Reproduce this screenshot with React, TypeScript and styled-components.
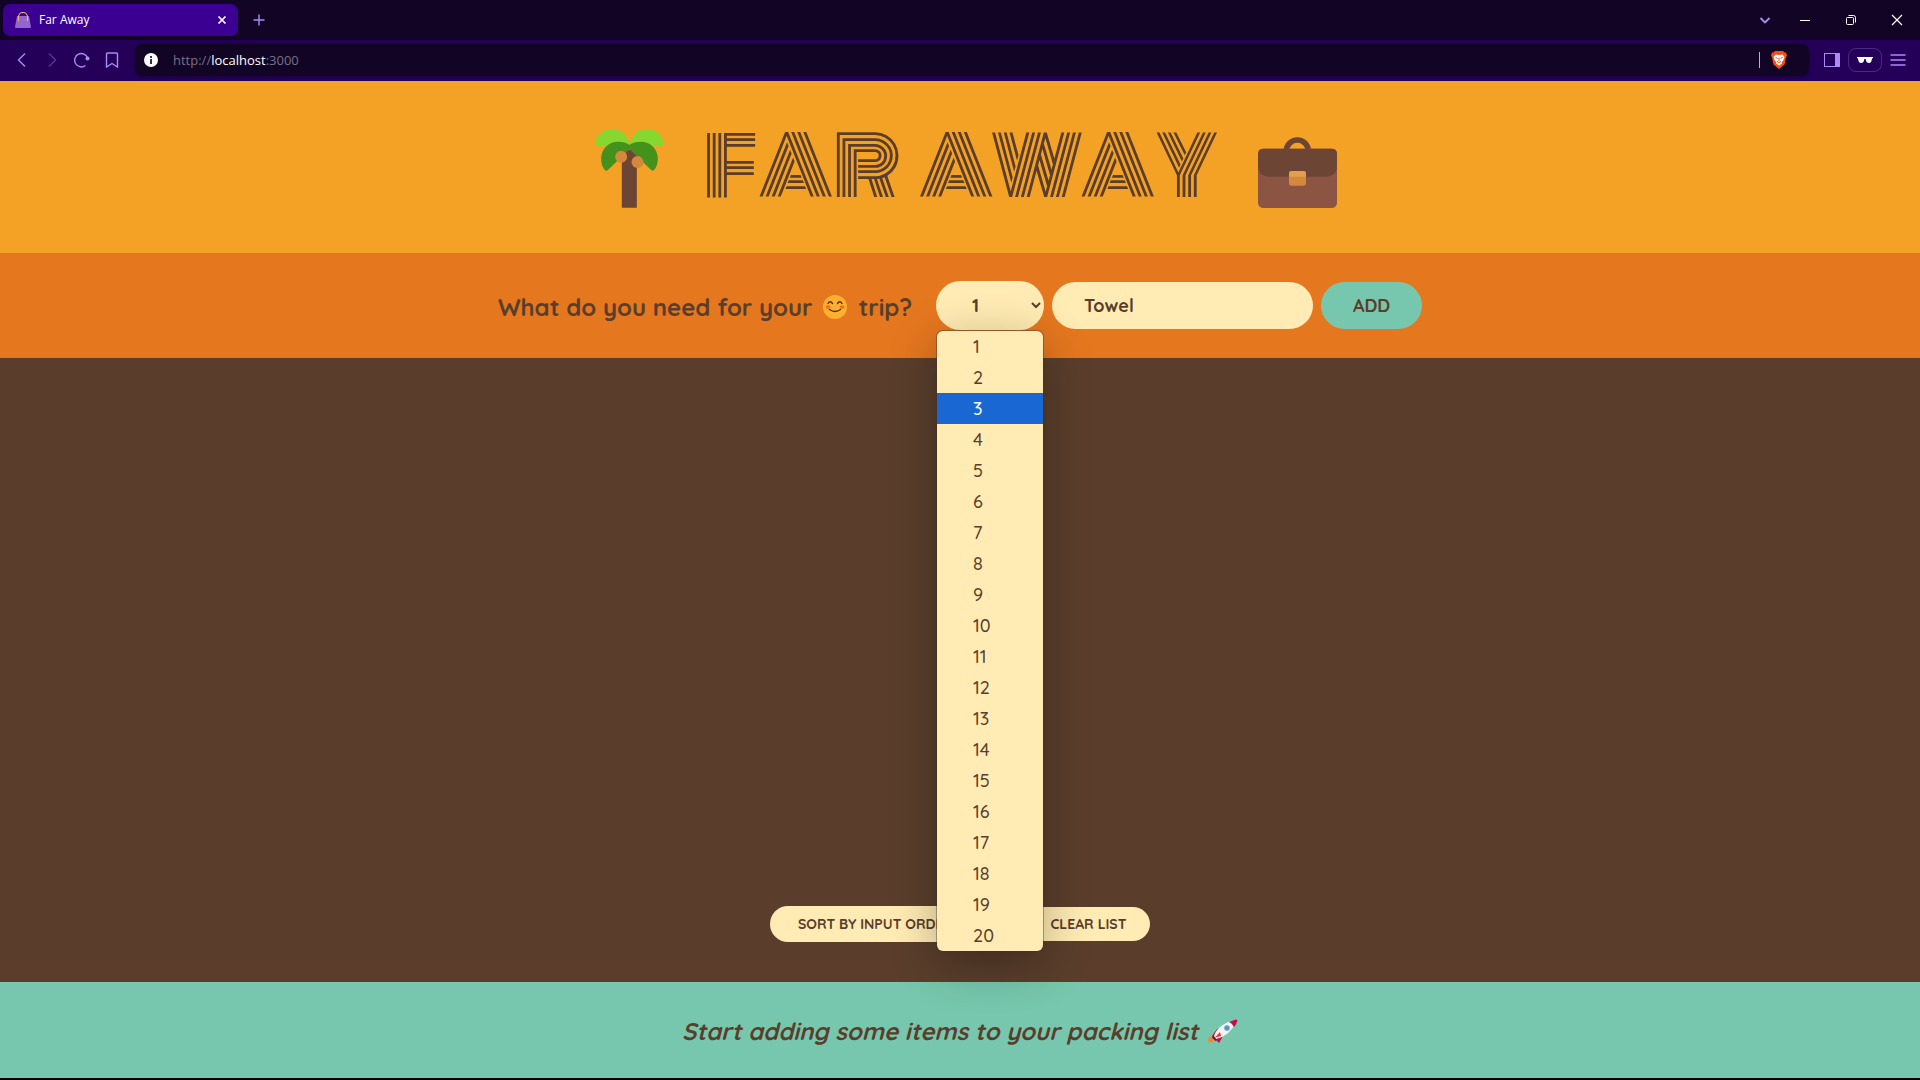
import React, { useState } from "react";
import styled, { createGlobalStyle } from "styled-components";

const color = {
  brown: "#5a3e2b",
  amber: "#f4a226",
  orange: "#e5771f",
  cream: "#ffebb3",
  teal: "#76c7ad",
  lilac: "#a98bf5",
};

const GlobalStyle = createGlobalStyle`
  *, *::before, *::after { box-sizing: border-box; }
  body {
    margin: 0;
    background: #000;
    color: ${color.brown};
    font-family: Quicksand, Lato, sans-serif;
  }
  button, select, input { font: inherit; color: inherit; border: 0; margin: 0; }
`;

const Page = styled.div`
  display: flex;
  flex-direction: column;
  min-height: 100vh;
  border-bottom: 2px solid #000;
`;

/* Browser frame */
const Frame = styled.div`
  font-family: "Segoe UI", "Open Sans", sans-serif;
  color: #fff;
`;

const TabStrip = styled.div`
  display: flex;
  align-items: center;
  height: 40px;
  padding-left: 3px;
  background: #120424;
`;

const Tab = styled.div`
  display: flex;
  align-items: center;
  gap: 8px;
  width: 235px;
  height: 32px;
  padding: 0 5px 0 12px;
  border-radius: 7px;
  background: #3b0091;
  font-size: 12px;
  line-height: 16px;
`;

const TabTitle = styled.span`
  flex: 1;
`;

const IconButton = styled.button<{ $width?: number; $color?: string }>`
  display: flex;
  align-items: center;
  justify-content: center;
  width: ${(p) => p.$width ?? 30}px;
  height: 24px;
  padding: 0;
  background: none;
  color: ${(p) => p.$color ?? color.lilac};
`;

const WindowButtons = styled.div`
  display: flex;
  margin-left: auto;
`;

const Toolbar = styled.div`
  display: flex;
  align-items: center;
  height: 41px;
  padding: 0 7px 1px;
  background: #240059;
`;

const AddressBar = styled.div`
  display: flex;
  flex: 1;
  align-items: center;
  height: 32px;
  margin: 0 8px;
  padding: 0 22px 0 9px;
  border-radius: 8px;
  background: #120424;
  box-shadow: 0 1px 4px rgba(0, 0, 0, 0.4);
`;

const Url = styled.div`
  flex: 1;
  padding-left: 15px;
  color: #77708a;
  font-size: 13px;
  line-height: 20px;
  b { font-weight: 400; color: #fff; }
`;

const Divider = styled.span`
  width: 1px;
  height: 16px;
  margin-right: 11px;
  background: #b8b2c4;
`;

const PrivateButton = styled(IconButton)`
  margin: 0 1px;
  border: 1px solid #4b2a86;
  border-radius: 8px;
`;

/* Application */
const Header = styled.header`
  display: flex;
  justify-content: center;
  gap: 40px;
  padding: 48px 0 45px 12px;
  background: ${color.amber};
  svg { align-self: flex-end; }
`;

const Title = styled.h1`
  display: flex;
  gap: 18px;
  margin: 0;
  font: 400 80px/76px Monoton, Quicksand, sans-serif;
  text-transform: uppercase;
`;

const AddForm = styled.form`
  display: flex;
  align-items: center;
  justify-content: center;
  gap: 8px;
  padding: 28px 0;
  background: ${color.orange};
`;

const Question = styled.h3`
  display: flex;
  align-items: center;
  gap: 11px;
  margin: 0 16px 0 0;
  padding-top: 2px;
  font-size: 24px;
  font-weight: 700;
  line-height: 32px;
`;

const Picker = styled.div`
  position: relative;
`;

const Select = styled.select<{ $small?: boolean }>`
  display: block;
  width: ${(p) => (p.$small ? 249 : 108)}px;
  height: ${(p) => (p.$small ? 36 : 49)}px;
  padding: ${(p) => (p.$small ? "0 24px" : "0 32px")};
  border-radius: 25px;
  background: ${color.cream};
  font-size: ${(p) => (p.$small ? 14 : 18)}px;
  font-weight: 700;
  outline: none;
`;

const Options = styled.ul`
  position: absolute;
  z-index: 1;
  top: 50px;
  left: 1px;
  right: 1px;
  margin: 0;
  padding: 0;
  overflow: hidden;
  list-style: none;
  border-radius: 6px;
  background: ${color.cream};
  box-shadow: 0 0 0 1px rgba(60, 50, 50, 0.4), 0 12px 48px rgba(0, 0, 0, 0.3);
`;

const Option = styled.li<{ $active: boolean }>`
  height: 31px;
  padding-left: 36px;
  font-size: 18px;
  font-weight: 500;
  line-height: 31px;
  color: ${(p) => (p.$active ? "#fff" : color.brown)};
  background: ${(p) => (p.$active ? "#1967d2" : "transparent")};
`;

const ItemInput = styled.input`
  width: 261px;
  height: 47px;
  padding: 0 32px;
  border-radius: 24px;
  background: ${color.cream};
  font-size: 18px;
  font-weight: 700;
  outline: none;
`;

const Button = styled.button<{ $small?: boolean }>`
  width: ${(p) => (p.$small ? 123 : 101)}px;
  height: ${(p) => (p.$small ? 34 : 47)}px;
  padding: 0;
  border-radius: 24px;
  background: ${(p) => (p.$small ? color.cream : color.teal)};
  font-size: ${(p) => (p.$small ? 14 : 18)}px;
  font-weight: 700;
  text-transform: uppercase;
`;

const List = styled.main`
  display: flex;
  flex: 1;
  align-items: flex-end;
  justify-content: center;
  padding-bottom: 40px;
  background: ${color.brown};
`;

const Actions = styled.div`
  display: flex;
  align-items: center;
  gap: 8px;
`;

const Footer = styled.footer`
  display: flex;
  align-items: center;
  justify-content: center;
  gap: 10px;
  padding: 33px 0 31px;
  background: ${color.teal};
  font-size: 24px;
  font-style: italic;
  font-weight: 700;
  line-height: 32px;
`;

const Line = ({ d, size = 16, width = 1.4 }: { d: string; size?: number; width?: number }) => (
  <svg width={size} height={size} viewBox="0 0 16 16" fill="none" stroke="currentColor" strokeWidth={width}>
    <path d={d} />
  </svg>
);

const Bag = () => (
  <svg width="16" height="16" viewBox="0 0 16 16">
    <path d="M2 4h12l2 11q0 1-1 1H1q-1 0-1-1z" fill="#9166cf" />
    <path d="M3.5 9V5a4.5 4.5 0 0 1 9 0v4" fill="none" stroke="#f0b35c" strokeWidth="1.2" />
  </svg>
);

const Brave = () => (
  <svg width="16" height="18" viewBox="0 0 16 18">
    <path d="M4 0h8l1.5 1.6 1.5 0 1 3-1 2-1.5 7L8 18l-5.500-4.400L1 6.600l-1-2 1-3 1.500 0z" fill="#fb4b12" />
    <path d="M4.500 3.500 8 4l3.500-.500L13.500 6l-1.500 4-1.500 1 .500 1.500L8 14.500 5 12.500 5.500 11 4 10 2.500 6z" fill="#fff" />
    <path d="m4.500 6.500 2 .800M11.500 6.500l-2 .800M8 6.500V10M6 10.500l2 1 2-1" stroke="#fb4b12" strokeWidth="1" fill="none" />
  </svg>
);

const Palm = () => (
  <svg width="69" height="79" viewBox="46 58 206 237">
    <path d="M52 110q-6 0-6-6C48 77 70 58 97 58c27 0 49 20 51 46l-12 6z" fill="#86d72f" />
    <path d="M246 110q6 0 6-6c-2-27-24-46-51-46-27 0-48 20-50 46l12 6z" fill="#86d72f" />
    <path d="M149 106c-9-7-20-10-34-10-29 0-51 22-51 51 0 13 4 25 11 34q4 5 9 0l65-62 65 62q5 5 9 0c7-9 11-21 11-34 0-29-22-51-51-51-14 0-25 3-34 10z" fill="#44911b" />
    <path d="M126 140q4-3 19-18 4-3 8 0l18 17v155h-45z" fill="#6d4534" />
    <circle cx="124" cy="141" r="18" fill="#d3883e" />
    <circle cx="173" cy="157" r="18" fill="#d3883e" />
  </svg>
);

const Briefcase = () => (
  <svg width="79" height="71" viewBox="1071 82 237 213">
    <path d="M1156 124a33 33 0 0 1 66 0" fill="none" stroke="#6d4534" strokeWidth="17" />
    <rect x="1071" y="117" width="237" height="178" rx="16" fill="#8c5543" />
    <path d="M1087 117h205q16 0 16 16v34q0 34-34 34h-169q-34 0-34-34v-34q0-16 16-16z" fill="#6d4534" />
    <rect x="1164" y="184" width="51" height="44" rx="8" fill="#d3883e" />
    <path d="M1164 201v-9q0-8 8-8h35q8 0 8 8v9z" fill="#e39f4d" />
  </svg>
);

const Smile = () => (
  <svg width="24" height="24" viewBox="0 0 24 24">
    <circle cx="12" cy="12" r="12" fill="#ffb02e" />
    <ellipse cx="5" cy="12" rx="2.500" ry="1.800" fill="#ff6723" />
    <ellipse cx="19" cy="12" rx="2.500" ry="1.800" fill="#ff6723" />
    <path d="M5 8.500q2-3.500 4.500 0M14.500 8.500q2.500-3.500 4.500 0M6.500 14.500q5.500 4 11 0" fill="none" stroke="#402a32" strokeWidth="1.300" strokeLinecap="round" />
  </svg>
);

const Rocket = () => (
  <svg width="30" height="25" viewBox="0 0 30 25">
    <path d="M0 23q0-6 4-5.500l3 3Q6 24 0 23z" fill="#ff822d" />
    <path d="M4 17 9 10q4-1 7 0L14 19l-3 5-2-2z" fill="#ca0b4a" />
    <path d="M6 17Q10 5 27 1q2 0 1 2Q22 17 8 20z" fill="#f4f4f4" />
    <path d="M21 3q4-2 7-2.500 2 0 1 2.500-1 3-3 5Q24 4 21 3z" fill="#ca0b4a" />
    <path d="M5 16.500 9 21l-1.500 1L4 18.500z" fill="#46265a" />
    <path d="M7 18.500 12 13l1 4z" fill="#f8312f" />
    <circle cx="19" cy="9" r="2.600" fill="#5092d8" stroke="#9bb4cf" />
  </svg>
);

export default function App() {
  const [item, setItem] = useState("Towel");
  const [quantity, setQuantity] = useState(1);
  const numbers = Array.from({ length: 20 }, (_, i) => i + 1);

  return (
    <Page>
      <GlobalStyle />
      <Frame>
        <TabStrip>
          <Tab>
            <Bag />
            <TabTitle>Far Away</TabTitle>
            <IconButton $width={22} $color="#fff" aria-label="Close tab"><Line d="m4.500 4.500 7 7m0-7-7 7" width={1.7} /></IconButton>
          </Tab>
          <IconButton $width={42} aria-label="New tab"><Line d="M8 2.500v11M2.500 8h11" /></IconButton>
          <WindowButtons>
            <IconButton $width={34} aria-label="Search tabs"><Line d="m3.500 6 4.500 4.500L12.500 6" width={1.8} /></IconButton>
            <IconButton $width={46} $color="#fff" aria-label="Minimize"><Line d="M3 8.500h10" width={1} /></IconButton>
            <IconButton $width={46} $color="#fff" aria-label="Restore"><Line d="M4.500 5.500h5q1 0 1 1v5q0 1-1 1h-5q-1 0-1-1v-5q0-1 1-1zM5.500 3.500h5q2 0 2 2v5" width={1} /></IconButton>
            <IconButton $width={46} $color="#fff" aria-label="Close window"><Line d="m3 3 10 10m0-10L3 13" width={1.2} /></IconButton>
          </WindowButtons>
        </TabStrip>
        <Toolbar>
          <IconButton aria-label="Back"><Line d="M11 1.500 4.500 8l6.500 6.500" /></IconButton>
          <IconButton $color="#5b3599" aria-label="Forward"><Line d="M5 1.500 11.500 8 5 14.500" /></IconButton>
          <IconButton aria-label="Reload">
            <svg width="16" height="16" viewBox="0 0 16 16">
              <path d="M11.500 13.500A6.700 6.700 0 1 1 13.700 6" fill="none" stroke="currentColor" strokeWidth="1.400" />
              <circle cx="13.500" cy="6.400" r="2" fill="currentColor" />
            </svg>
          </IconButton>
          <IconButton aria-label="Bookmark"><Line d="M3.500 1h9q1 0 1 1v13L8 11.500 2.500 15V2q0-1 1-1z" /></IconButton>
          <AddressBar>
            <svg width="14" height="14" viewBox="0 0 14 14">
              <circle cx="7" cy="7" r="7" fill="#fff" />
              <path d="M6 3h2v2H6zM6 6h2v5H6z" fill="#3a2b52" />
            </svg>
            <Url>http://<b>localhost</b>:3000</Url>
            <Divider />
            <Brave />
          </AddressBar>
          <IconButton aria-label="Sidebar">
            <svg width="16" height="14" viewBox="0 0 16 14">
              <rect x=".5" y=".5" width="15" height="13" fill="none" stroke="currentColor" />
              <path d="M11 0h5v14h-5z" fill="currentColor" />
            </svg>
          </IconButton>
          <PrivateButton $width={34} $color="#fff" aria-label="Private window">
            <svg width="16" height="6" viewBox="0 0 16 6"><path d="M0 0h16v1l-1 .5Q14.500 6 12 6 9 6 8.700 2H7.300Q7 6 4 6 1.500 6 1 1.500L0 1z" fill="currentColor" /></svg>
          </PrivateButton>
          <IconButton aria-label="Menu"><Line d="M.5 3h15M.5 8h15M.5 13h15" width={1.3} /></IconButton>
        </Toolbar>
      </Frame>

      <Header>
        <Palm />
        <Title>
          <span>Far</span>
          <span>Away</span>
        </Title>
        <Briefcase />
      </Header>

      <AddForm onSubmit={(e) => e.preventDefault()}>
        <Question>What do you need for your <Smile /> trip?</Question>
        <Picker>
          <Select aria-label="Quantity" value={quantity} onChange={(e) => setQuantity(Number(e.target.value))}>
            {numbers.map((n) => <option key={n} value={n}>{n}</option>)}
          </Select>
          <Options role="listbox" aria-label="Quantity options">
            {numbers.map((n) => (
              <Option key={n} role="option" aria-selected={n === 3} $active={n === 3} onClick={() => setQuantity(n)}>{n}</Option>
            ))}
          </Options>
        </Picker>
        <ItemInput aria-label="Item" value={item} onChange={(e) => setItem(e.target.value)} />
        <Button>Add</Button>
      </AddForm>

      <List>
        <Actions>
          <Select $small aria-label="Sort order">
            <option>SORT BY INPUT ORDER</option>
          </Select>
          <Button $small type="button">Clear list</Button>
        </Actions>
      </List>

      <Footer>Start adding some items to your packing list <Rocket /></Footer>
    </Page>
  );
}
